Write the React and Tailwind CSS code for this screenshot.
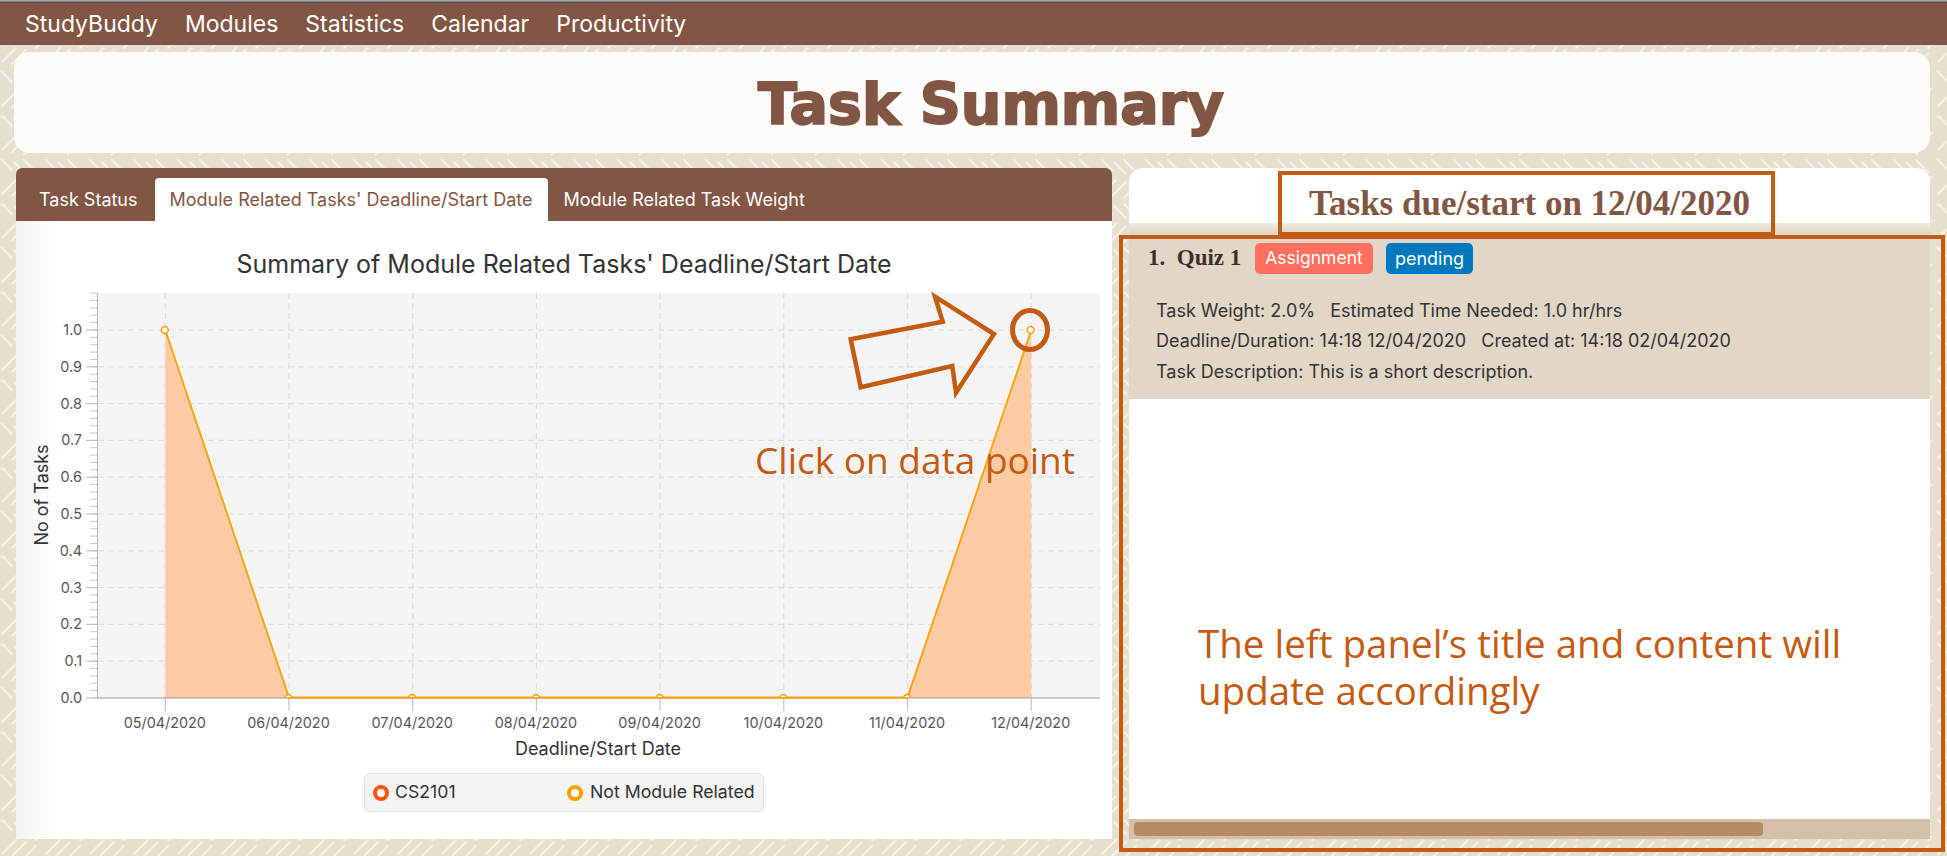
const navItems = ['StudyBuddy', 'Modules', 'Statistics', 'Calendar', 'Productivity'];
const dates = ['05/04/2020', '06/04/2020', '07/04/2020', '08/04/2020', '09/04/2020', '10/04/2020', '11/04/2020', '12/04/2020'];
const yMajor = [0, 0.1, 0.2, 0.3, 0.4, 0.5, 0.6, 0.7, 0.8, 0.9, 1.0];

const xAt = (i) => 165.3 + i * 123.7;
const yAt = (v) => 698 - v * 368;

const Pattern = () => (
  <svg className="absolute inset-0" width="1947" height="856">
    <defs>
      <pattern id="weave" width="44" height="44" patternUnits="userSpaceOnUse">
        <g stroke="#f4f0e6" strokeWidth="2.4" strokeLinecap="round">
          <path d="M2 18 L16 4" />
          <path d="M12 20 L26 6" />
          <path d="M24 22 L36 10" />
          <path d="M24 28 L36 40" />
          <path d="M14 30 L26 42" />
          <path d="M2 28 L12 38" />
          <path d="M36 4 L42 -2" />
        </g>
      </pattern>
    </defs>
    <rect width="1947" height="856" fill="#e5dfcd" />
    <rect width="1947" height="856" fill="url(#weave)" />
  </svg>
);

const Chart = () => {
  const minor = [];
  for (let i = 0; i <= 55; i++) minor.push(698 - i * 7.36);
  const line = dates.map((d, i) => `${xAt(i)},${i === 0 || i === 7 ? yAt(1) : yAt(0) - 0.5}`).join(' ');
  return (
    <svg width="1096" height="480" viewBox="16 285 1096 480" className="block">
      <defs>
        <clipPath id="plot">
          <rect x="98" y="293" width="1002" height="404" />
        </clipPath>
      </defs>
      <rect x="98" y="293" width="1002" height="405" fill="#f4f4f4" />
      {yMajor.slice(1).map((v) => (
        <line key={v} x1="98" x2="1100" y1={yAt(v)} y2={yAt(v)} stroke="#dedede" strokeWidth="1.2" strokeDasharray="6 4" />
      ))}
      {dates.map((d, i) => (
        <line key={d} x1={xAt(i)} x2={xAt(i)} y1="293" y2="698" stroke="#dedede" strokeWidth="1.2" strokeDasharray="6 4" />
      ))}

      <polygon points={`${xAt(0)},${yAt(1)} ${xAt(1)},698 ${xAt(0)},698`} fill="#fbcba3" />
      <polygon points={`${xAt(6)},698 ${xAt(7)},${yAt(1)} ${xAt(7)},698`} fill="#fbcba3" />

      {minor.map((y) => (
        <line key={y} x1="90" x2="97" y1={y} y2={y} stroke="#c8c8c8" strokeWidth="1" />
      ))}
      {yMajor.map((v) => (
        <line key={v} x1="86" x2="97" y1={yAt(v)} y2={yAt(v)} stroke="#bdbdbd" strokeWidth="1" />
      ))}
      <line x1="97.5" x2="97.5" y1="293" y2="698" stroke="#b5b5b5" strokeWidth="1" />
      <line x1="97" x2="1100" y1="698" y2="698" stroke="#999999" strokeWidth="1.2" />
      {dates.map((d, i) => (
        <line key={d} x1={xAt(i)} x2={xAt(i)} y1="698" y2="711" stroke="#c4c4c4" strokeWidth="1.2" />
      ))}

      <polyline points={line} fill="none" stroke="#f9a000" strokeWidth="1.8" />
      <g clipPath="url(#plot)">
        {dates.map((d, i) => (
          <circle key={d} cx={xAt(i) - 0.5} cy={i === 0 || i === 7 ? yAt(1) : yAt(0)} r="3.4" fill="#ffffff" stroke="#f9a000" strokeWidth="1.5" />
        ))}
      </g>

      <g fontFamily="Inter, sans-serif" fontSize="14.4" fill="#555555">
        {yMajor.map((v) => (
          <text key={v} x="82" y={yAt(v) + 5} textAnchor="end">{v.toFixed(1)}</text>
        ))}
        {dates.map((d, i) => (
          <text key={d} x={xAt(i) - 0.5} y="728" textAnchor="middle">{d}</text>
        ))}
      </g>
      <text x="598" y="755" textAnchor="middle" fontFamily="Inter, sans-serif" fontSize="18" fill="#333333">Deadline/Start Date</text>
      <text transform="translate(48 495) rotate(-90)" textAnchor="middle" fontFamily="Inter, sans-serif" fontSize="18" fill="#333333">No of Tasks</text>
    </svg>
  );
};

const Annotations = () => (
  <>
    <div className="absolute left-[1278px] top-[171px] w-[497px] h-[65px] border-[4px] border-[#c55a11]" />
    <div className="absolute left-[1119px] top-[235px] w-[826px] h-[617px] border-[4.5px] border-[#c55a11]" />
    <svg className="absolute inset-0 pointer-events-none" width="1947" height="856">
      <polygon points="850.7,339.3 942.7,321.7 935,296.7 994,334 956,392.7 952.3,366 860.7,387.3" fill="none" stroke="#c55a11" strokeWidth="4.5" />
      <ellipse cx="1030" cy="330" rx="17.5" ry="19.5" fill="none" stroke="#c55a11" strokeWidth="5" />
    </svg>
    <div className="absolute left-[755px] top-[436px] text-[37px] leading-[48px] font-medium whitespace-nowrap text-[#c55a11] font-['Open_Sans',sans-serif]">Click on data point</div>
    <div className="absolute left-[1198px] top-[620px] text-[38.5px] leading-[47px] font-medium whitespace-nowrap text-[#c55a11] font-['Open_Sans',sans-serif]">
      <div>The left panel’s title and content will</div>
      <div>update accordingly</div>
    </div>
  </>
);

export default function App() {
  return (
    <div className="relative w-[1947px] h-[856px] overflow-hidden font-['Inter',sans-serif] text-[#333333]">
      <Pattern />
      <div className="relative flex flex-col h-full">
        <div className="h-[3px] bg-gradient-to-b from-[#c4c4c4] to-[#3a3a3a]" />
        <nav className="h-[42px] bg-[#825642] flex items-center pl-[25px] gap-[27px] text-white text-[23px]">
          {navItems.map((n) => (
            <span key={n}>{n}</span>
          ))}
        </nav>

        <header className="mt-[7px] ml-[14px] mr-[17px] h-[101px] rounded-[16px] bg-[#fdfcfa]/95 flex items-center justify-center pl-[38px] pt-[4px]">
          <h1 className="text-[57px] font-bold text-[#825642] font-['DejaVu_Sans',sans-serif] [-webkit-text-stroke:2px_#825642]">Task Summary</h1>
        </header>

        <div className="mt-[15px] flex ml-[16px] mr-[17px] gap-[17px] h-[671px]">
          <section className="w-[1096px] flex flex-col bg-white bg-[linear-gradient(to_right,#f3f3f3,#ffffff_40px)]">
            <div className="h-[53px] bg-[#825642] rounded-t-[6px] flex items-end pl-[14px] text-[18px]">
              <div className="h-[43px] px-[9px] flex items-center text-white mr-[8px]">Task Status</div>
              <div className="h-[43px] w-[393px] flex items-center justify-center bg-white text-[#825642] rounded-t-[4px]">Module Related Tasks' Deadline/Start Date</div>
              <div className="h-[43px] pl-[16px] flex items-center text-white">Module Related Task Weight</div>
            </div>
            <h2 className="h-[64px] pt-[26px] text-center text-[25px] leading-[34px] text-[#333333]">Summary of Module Related Tasks' Deadline/Start Date</h2>
            <Chart />
            <div className="mt-[8px] ml-[348px] w-[400px] h-[39px] flex items-center bg-[#f4f4f4] border border-[#e2e2e2] rounded-[5px] text-[17.7px] pl-[8px]">
              <span className="w-[16px] h-[16px] rounded-full border-[4px] border-[#f9540c] bg-white" />
              <span className="ml-[6px] w-[172px]">CS2101</span>
              <span className="w-[16px] h-[16px] rounded-full border-[4px] border-[#f9a000] bg-white" />
              <span className="ml-[7px]">Not Module Related</span>
            </div>
          </section>

          <section className="flex-1 flex flex-col">
            <div className="h-[55px] bg-white rounded-t-[14px] flex items-center justify-center pt-[17px]">
              <h2 className="text-[35px] font-bold text-[#825642] font-['Liberation_Serif',serif]">Tasks due/start on 12/04/2020</h2>
            </div>
            <div className="h-[176px] bg-[linear-gradient(to_bottom,#f0e9de,#e2d7c6_10px)]">
              <div className="flex items-center pt-[18px] pl-[19px]">
                <span className="w-[107px] text-[23px] font-bold whitespace-pre text-[#3d2f2a] font-['Liberation_Serif',serif]">1.  Quiz 1</span>
                <span className="h-[31px] w-[118px] rounded-[5px] bg-[#ff6f5e] text-white flex items-center justify-center text-[17.5px]">Assignment</span>
                <span className="ml-[13px] h-[31px] w-[87px] rounded-[5px] bg-[#0079bf] text-white flex items-center justify-center text-[18px]">pending</span>
              </div>
              <div className="mt-[20px] pl-[27px] text-[18px] leading-[30.5px] whitespace-pre text-[#333333]">
                <div>Task Weight: 2.0%   Estimated Time Needed: 1.0 hr/hrs</div>
                <div>Deadline/Duration: 14:18 12/04/2020   Created at: 14:18 02/04/2020</div>
                <div>Task Description: This is a short description.</div>
              </div>
            </div>
            <div className="flex-1 bg-white" />
            <div className="h-[20px] bg-[#d3c0a8] flex items-center pl-[5px]">
              <div className="w-[629px] h-[14px] rounded-[4px] bg-[#b88a62]" />
            </div>
          </section>
        </div>
      </div>
      <Annotations />
    </div>
  );
}
